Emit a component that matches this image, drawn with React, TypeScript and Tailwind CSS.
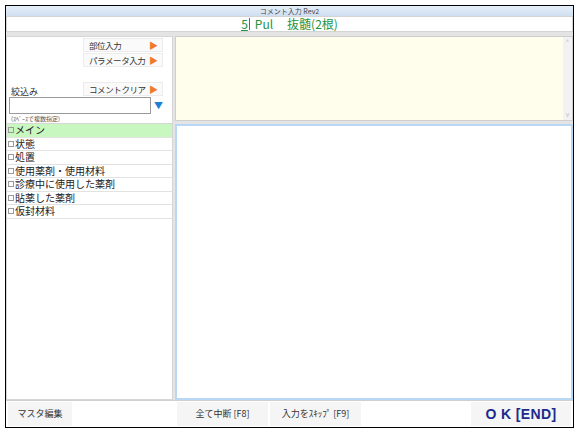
import React from 'react';

const items = ['メイン', '状態', '処置', '使用薬剤・使用材料', '診療中に使用した薬剤', '貼薬した薬剤', '仮封材料'];

const font = { fontFamily: '"Noto Sans CJK JP", "Noto Sans", sans-serif' };

const SideButton: React.FC<{ label: string }> = ({ label }) => (
  <div className="flex h-[14px] w-[80px] items-center justify-between border border-[#ececec] bg-[#fafafa] pl-[5px] pr-[4px]">
    <span className="whitespace-nowrap text-[8.5px] leading-none tracking-[-0.4px] text-[#333]">{label}</span>
    <span className="text-[9px] leading-none text-[#f07a2a]">▶</span>
  </div>
);

const BottomButton: React.FC<{ label: string; className?: string }> = ({ label, className = '' }) => (
  <div className={`flex h-full items-center justify-center whitespace-nowrap bg-[#f5f5f5] text-[9px] text-[#333] ${className}`}>{label}</div>
);

export default function App() {
  return (
    <div className="h-[435px] w-[581px] bg-white pl-[5px] pt-[5px]" style={font}>
      <div className="flex h-[423px] w-[569px] flex-col border border-black bg-[#e4e4e4]">
        {/* title bar */}
        <div className="flex h-[10px] items-center justify-center bg-gradient-to-b from-[#e6eff9] to-[#cfdff1] text-[7px] leading-none text-[#444]">
          コメント入力 Rev2
        </div>
        {/* header */}
        <div className="flex h-[16px] items-center justify-center border border-[#d4d4d4] bg-white text-[12px] leading-none text-[#23923c]">
          <span className="underline">5</span>
          <span className="mx-[1px] h-[12px] w-px bg-[#23923c]" />
          <span className="ml-[4px]">Pul</span>
          <span className="ml-[14px]">抜髄(2根)</span>
        </div>
        {/* main */}
        <div className="mt-[4px] flex flex-1 gap-[2px]">
          {/* left panel */}
          <div className="flex w-[167px] flex-col border border-[#d6d6d6] bg-white">
            <div className="flex h-[86px] flex-col px-[2px]">
              <div className="ml-[74px] mt-[1px] flex flex-col gap-[1px]">
                <SideButton label="部位入力" />
                <SideButton label="パラメータ入力" />
              </div>
              <div className="mt-[15px] flex items-end justify-between">
                <span className="ml-[2px] text-[9px] leading-none text-[#333]">絞込み</span>
                <div className="mr-[7px]">
                  <SideButton label="コメントクリア" />
                </div>
              </div>
              <div className="mt-[1px] flex items-center">
                <div className="h-[17px] w-[142px] border border-[#9a9a9a] bg-white" />
                <span className="ml-[3px] text-[9px] leading-none text-[#1e7fd6]">▼</span>
              </div>
              <span className="ml-[2px] mt-[2px] whitespace-nowrap text-[6px] leading-none text-[#555]">(ｽﾍﾟｰｽで複数指定)</span>
            </div>
            <div className="flex flex-col border-t border-[#d6d6d6]">
              {items.map((item, i) => (
                <div
                  key={item}
                  className={`flex h-[13.5px] items-center whitespace-nowrap border-b border-[#e2e2e2] pl-[1px] text-[10px] leading-none text-[#222] ${i === 0 ? 'bg-[#c8f7c0]' : 'bg-white'}`}
                >
                  <span className="mr-[1px] inline-block h-[6px] w-[6px] border border-[#999]" />
                  {item}
                </div>
              ))}
            </div>
          </div>
          {/* right panel */}
          <div className="flex flex-1 flex-col gap-[3px]">
            <div className="flex h-[85px] border border-[#cfcfcf] bg-[#fffeec]">
              <div className="flex-1" />
              <div className="flex w-[9px] flex-col items-center justify-between bg-[#f2f2f2] py-[2px] text-[6px] leading-none text-[#bbb]">
                <span>^</span>
                <span>v</span>
              </div>
            </div>
            <div className="flex-1 border-2 border-[#b9d8f5] bg-white" />
          </div>
        </div>
        {/* bottom bar */}
        <div className="flex h-[27px] items-stretch gap-[2px] border-t border-[#d0d0d0] bg-white px-[2px] py-[1px]">
          <BottomButton label="マスタ編集" className="w-[64px]" />
          <div className="w-[101px]" />
          <BottomButton label="全て中断 [F8]" className="w-[91px]" />
          <BottomButton label="入力をｽｷｯﾌﾟ [F9]" className="w-[91px]" />
          <div className="flex-1" />
          <div className="flex w-[100px] items-center justify-center bg-[#f5f5f5] text-[14px] font-bold tracking-wide text-[#1c2b8c]" style={{ fontFamily: '"Liberation Sans", sans-serif' }}>
            O K [END]
          </div>
        </div>
      </div>
    </div>
  );
}
